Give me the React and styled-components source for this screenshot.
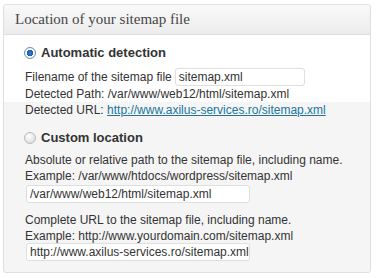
import React from "react";
import styled, { createGlobalStyle } from "styled-components";

const Global = createGlobalStyle`
  html, body { margin: 0; padding: 0; background: #ffffff; }
  body { font-family: "Liberation Sans", Arial, sans-serif; font-size: 12px; color: #333333; }
`;

const Page = styled.div`
  padding: 4px 5px 0 3px;
`;

const Box = styled.div`
  width: 368px;
  height: 269px;
  box-sizing: border-box;
  border: 1px solid #dfdfdf;
  border-radius: 3px;
  background: #f5f5f5;
  overflow: hidden;
`;

const Header = styled.div`
  height: 30px;
  box-sizing: border-box;
  border-bottom: 1px solid #dfdfdf;
  background: linear-gradient(to bottom, #f9f9f9, #ececec);
  padding: 5px 0 0 11px;
  font-family: "Liberation Serif", Georgia, serif;
  font-size: 15px;
  color: #464646;
  line-height: 18px;
`;

const Section = styled.div`
  background: ${(p) => (p.$active ? "#ffffff" : "transparent")};
  padding: ${(p) => p.$pad};
`;

const OptionRow = styled.label`
  display: flex;
  align-items: center;
  gap: 5px;
  padding-left: 20px;
  font-weight: bold;
  font-size: 13px;
  line-height: 16px;
  color: #333;
`;

const Radio = styled.span`
  width: 12px;
  height: 12px;
  border-radius: 50%;
  box-sizing: border-box;
  border: 1px solid ${(p) => (p.$checked ? "#6b8fb3" : "#bbbbbb")};
  background: ${(p) =>
    p.$checked
      ? "radial-gradient(circle at 50% 50%, #2f7fd6 0, #1b5fa8 3px, #ffffff 3.5px, #e8e8e8 6px)"
      : "radial-gradient(circle at 40% 35%, #ffffff 0, #e2e2e2 6px)"};
`;

const Line = styled.div`
  padding-left: 21px;
  line-height: 16px;
`;

const FieldLine = styled.div`
  padding-left: 21px;
  display: flex;
  align-items: center;
  gap: 3px;
  height: ${(p) => p.$h || 18}px;
`;

const Field = styled.input`
  box-sizing: border-box;
  height: 18px;
  width: ${(p) => p.$w}px;
  border: 1px solid #dfdfdf;
  border-radius: 3px;
  background: #ffffff;
  font-family: "Liberation Sans", Arial, sans-serif;
  font-size: 12px;
  color: #333;
  padding: 0 0 0 3px;
  margin: ${(p) => p.$m || "0"};
  outline: none;
`;

const Link = styled.a`
  color: #21759b;
  text-decoration: underline;
`;

export default function App() {
  return (
    <>
      <Global />
      <Page>
        <Box>
          <Header>Location of your sitemap file</Header>
          <Section $active $pad="10px 0 0 0">
            <OptionRow>
              <Radio $checked />
              Automatic detection
            </OptionRow>
            <FieldLine $h={20} style={{ marginTop: 6 }}>
              Filename of the sitemap file
              <Field $w={130} defaultValue="sitemap.xml" readOnly />
            </FieldLine>
            <Line style={{ marginTop: -1 }}>Detected Path: /var/www/web12/html/sitemap.xml</Line>
          </Section>
          <Section $pad="0">
            <Line>
              Detected URL: <Link href="#">http://www.axilus-services.ro/sitemap.xml</Link>
            </Line>
            <OptionRow style={{ marginTop: 12 }}>
              <Radio />
              Custom location
            </OptionRow>
            <Line style={{ marginTop: 6 }}>Absolute or relative path to the sitemap file, including name.</Line>
            <Line>Example: /var/www/htdocs/wordpress/sitemap.xml</Line>
            <FieldLine>
              <Field $w={224} $m="1px 0 0 1px" defaultValue="/var/www/web12/html/sitemap.xml" readOnly />
            </FieldLine>
            <Line style={{ marginTop: 10 }}>Complete URL to the sitemap file, including name.</Line>
            <Line>Example: http://www.yourdomain.com/sitemap.xml</Line>
            <FieldLine style={{ marginTop: -1 }}>
              <Field $w={224} $m="0 0 0 1px" defaultValue="http://www.axilus-services.ro/sitemap.xml" readOnly />
            </FieldLine>
          </Section>
        </Box>
      </Page>
    </>
  );
}
